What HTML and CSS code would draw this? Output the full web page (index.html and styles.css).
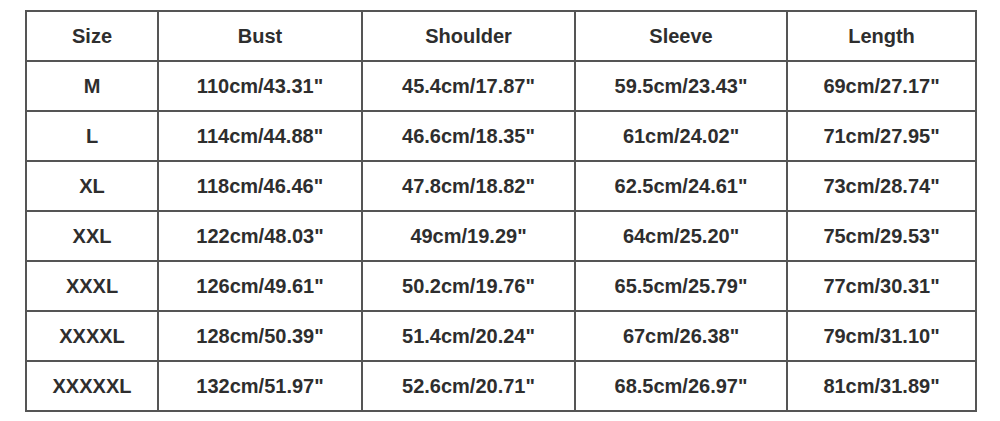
FILE: index.html
```html
<!DOCTYPE html>
<html>
<head>
<meta charset="utf-8">
<link rel="stylesheet" href="styles.css">
</head>
<body>
<table class="size-table">
  <colgroup>
    <col class="c1"><col class="c2"><col class="c3"><col class="c4"><col class="c5">
  </colgroup>
  <tr><td>Size</td><td>Bust</td><td>Shoulder</td><td>Sleeve</td><td>Length</td></tr>
  <tr><td>M</td><td>110cm/43.31"</td><td>45.4cm/17.87"</td><td>59.5cm/23.43"</td><td>69cm/27.17"</td></tr>
  <tr><td>L</td><td>114cm/44.88"</td><td>46.6cm/18.35"</td><td>61cm/24.02"</td><td>71cm/27.95"</td></tr>
  <tr><td>XL</td><td>118cm/46.46"</td><td>47.8cm/18.82"</td><td>62.5cm/24.61"</td><td>73cm/28.74"</td></tr>
  <tr><td>XXL</td><td>122cm/48.03"</td><td>49cm/19.29"</td><td>64cm/25.20"</td><td>75cm/29.53"</td></tr>
  <tr><td>XXXL</td><td>126cm/49.61"</td><td>50.2cm/19.76"</td><td>65.5cm/25.79"</td><td>77cm/30.31"</td></tr>
  <tr><td>XXXXL</td><td>128cm/50.39"</td><td>51.4cm/20.24"</td><td>67cm/26.38"</td><td>79cm/31.10"</td></tr>
  <tr><td>XXXXXL</td><td>132cm/51.97"</td><td>52.6cm/20.71"</td><td>68.5cm/26.97"</td><td>81cm/31.89"</td></tr>
</table>
</body>
</html>
```
FILE: styles.css
```css
html, body {
  margin: 0;
  padding: 0;
  background: #ffffff;
}
body {
  padding: 10px 0 0 25px;
}
.size-table {
  border-collapse: collapse;
  table-layout: fixed;
  width: 950px;
  font-family: "Liberation Sans", Arial, sans-serif;
  font-weight: bold;
  font-size: 20px;
  color: #2e2e2e;
}
.c1 { width: 132px; }
.c2 { width: 204px; }
.c3 { width: 213px; }
.c4 { width: 212px; }
.c5 { width: 189px; }
.size-table tr {
  height: 50px;
}
.size-table td {
  border: 2px solid #555555;
  text-align: center;
  vertical-align: middle;
  padding: 0;
}
```
